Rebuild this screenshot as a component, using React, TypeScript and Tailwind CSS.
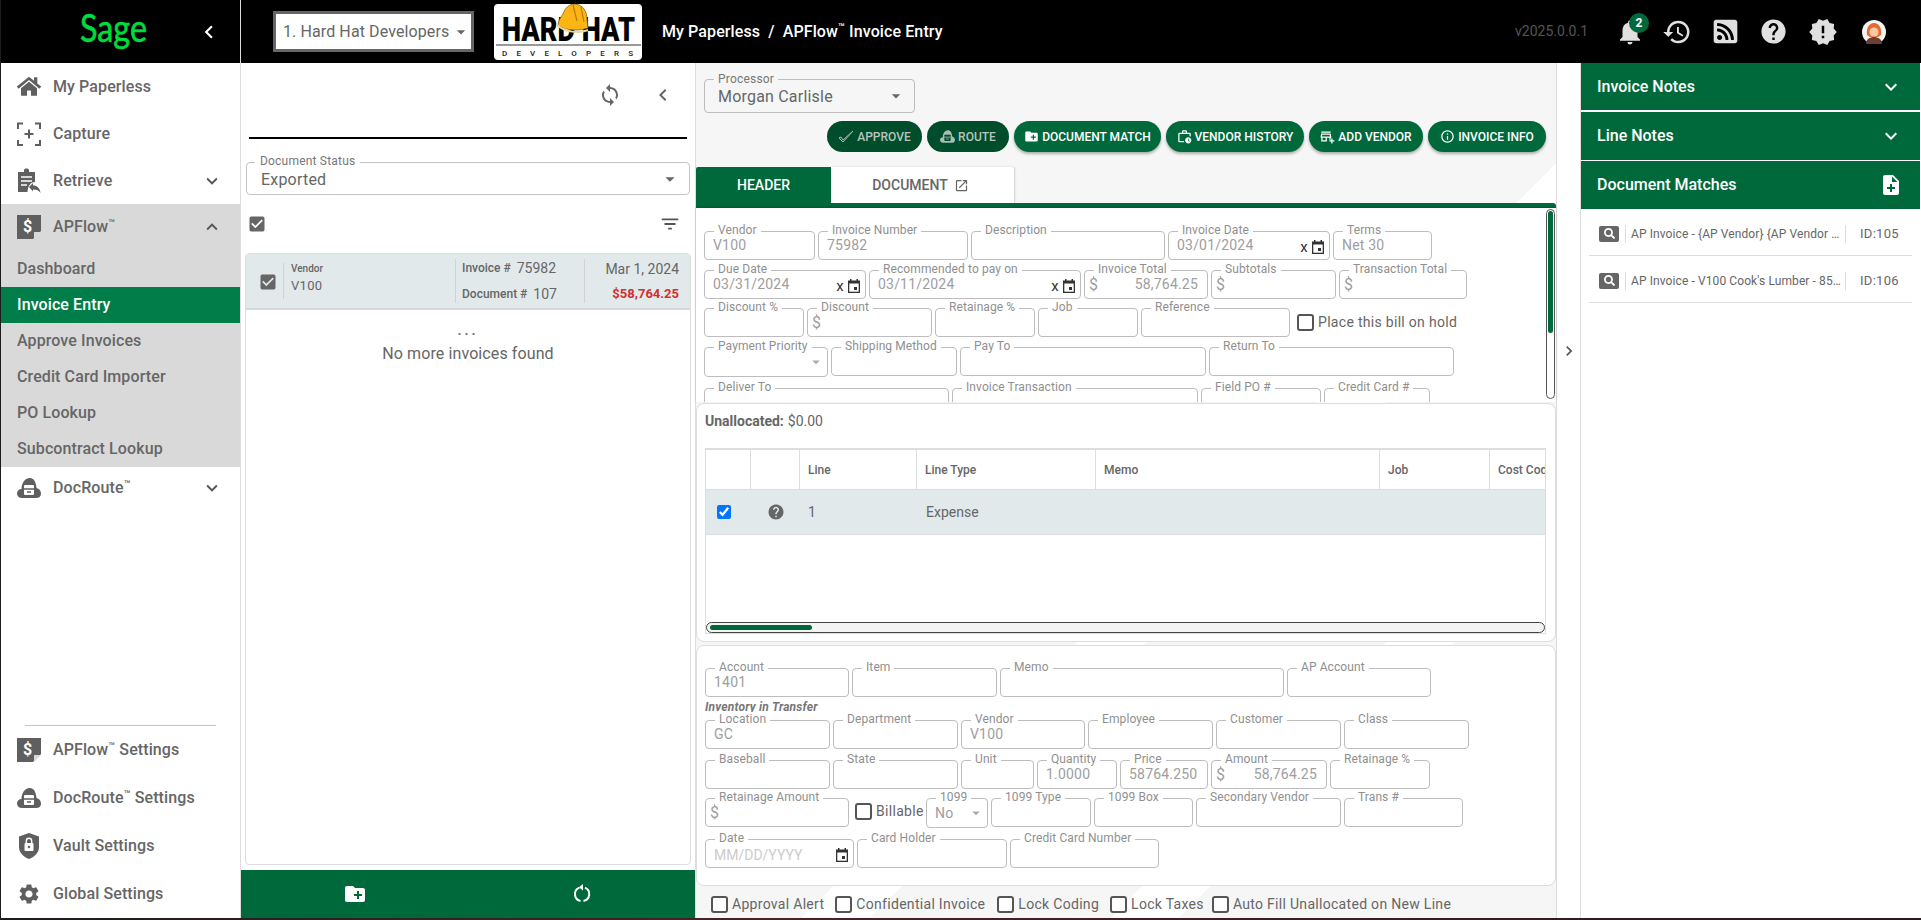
import React from "react";
import clsx from "clsx";
import { FaHome, FaRssSquare, FaSearch } from "react-icons/fa";
import {
  MdArrowDropDown,
  MdCheckBox,
  MdChevronLeft,
  MdCreateNewFolder,
  MdExpandLess,
  MdExpandMore,
  MdFilterList,
  MdHelp,
  MdHistory,
  MdInfoOutline,
  MdNewReleases,
  MdNoteAdd,
  MdNotifications,
  MdOpenInNew,
  MdOutlineAddBusiness,
  MdOutlineWorkHistory,
  MdChevronRight,
  MdSettings,
  MdSync,
} from "react-icons/md";

const CaptureIcon = () => (
  <svg width="24" height="24" viewBox="0 0 24 24" fill="none" stroke="#5f5f5f" strokeWidth="2">
    <path d="M1 7V1.5H6M18 1.5H23V7M1 18V23H6M18 23H23V18M12 7.5V16.5M7.5 12H16.5" />
  </svg>
);

const RetrieveIcon = () => (
  <svg width="24" height="26" viewBox="0 0 24 26" fill="#5f5f5f">
    <path d="M1 4H7V2.5C7 1 8 .5 9.5 .5S12 1 12 2.5V4H18V14C14 14 11 17 10.5 24H1Z" />
    <path d="M4 9H15M4 13H15M4 17H10" stroke="#fff" strokeWidth="1.6" />
    <path d="M12 19L16 15V17.5C20 17.5 23 20 23.5 25C22 22.5 20 21.5 16 21.5V23.5Z" />
  </svg>
);

const FlowIcon = () => (
  <svg width="24" height="24" viewBox="0 0 24 24">
    <path d="M0 0H24V16L16 24H0Z" fill="#5f5f5f" />
    <path d="M17 24L24 17H17Z" fill="#d9d9d9" />
    <text x="6" y="17" fontSize="16" fontWeight="700" fontFamily="Roboto, sans-serif" fill="#fff">
      $
    </text>
  </svg>
);

const CloudIcon = ({ size = 24, fill = "#5f5f5f", inner = "#fff" }: { size?: number; fill?: string; inner?: string }) => (
  <svg width={size} height={size} viewBox="0 0 24 24">
    <path
      d="M5 22C2 22 0 20 0 17.5S2 13 4.5 13C4.5 7 8 2 12.5 2S19 6 19.5 12C22 12.5 24 14.5 24 17.5S22 22 19 22Z"
      fill={fill}
    />
    <rect x="7" y="9" width="10" height="10" rx="1" fill={inner} />
    <path d="M7 13H17M10 16H14" stroke={fill} strokeWidth="1.3" />
  </svg>
);

const VaultIcon = () => (
  <svg width="24" height="26" viewBox="0 0 24 26">
    <path d="M12 0L22 3.5V14C22 20 17 24 12 26C7 24 2 20 2 14V3.5Z" fill="#5f5f5f" />
    <rect x="7.5" y="10" width="9" height="8" rx="1" fill="#fff" />
    <path d="M9.3 10V8A2.7 2.7 0 0 1 14.7 8V10" fill="none" stroke="#fff" strokeWidth="1.4" />
    <circle cx="12" cy="14" r="1.2" fill="#5f5f5f" />
  </svg>
);

const CalendarIcon = () => (
  <svg width="12" height="14" viewBox="0 0 12 14">
    <path d="M2 0H3.5V1.5H8.5V0H10V1.5H12V14H0V1.5H2Z" fill="#333" />
    <rect x="1.3" y="4.5" width="9.4" height="8.2" fill="#fff" />
    <rect x="6" y="8" width="3" height="3" fill="#333" />
  </svg>
);

const CheckIcon = () => (
  <svg width="16" height="16" viewBox="0 0 16 16" fill="none" stroke="#a9bdb2" strokeWidth="1">
    <path d="M1 9L5 13L15 2L5 11L3 8Z" />
  </svg>
);

const ReloadIcon = () => (
  <svg width="24" height="24" viewBox="0 0 24 24" fill="none" stroke="#fff" strokeWidth="2">
    <path d="M9.5 5.6A7 7 0 0 0 10.5 19" />
    <path d="M13.5 19A7 7 0 0 0 15 5.7" />
    <path d="M13 2V8.5L9 5.2Z" fill="#fff" stroke="none" />
  </svg>
);

const Avatar = () => (
  <svg width="24" height="24" viewBox="0 0 24 24">
    <circle cx="12" cy="12" r="12" fill="#f4f4f4" />
    <path d="M4 24C4 19 8 17 12 17S20 19 20 24Z" fill="#6b3f33" />
    <path d="M5 15C4 8 7 3 12 3S20 8 19 15L16 17H8Z" fill="#e8692c" />
    <circle cx="12" cy="12" r="4.6" fill="#f7c9a8" />
  </svg>
);

const HardHatLogo = () => (
  <svg width="148" height="56" viewBox="0 0 148 56" className="rounded-[4px] bg-white">
    <text
      x="8"
      y="37"
      fontSize="33"
      fontWeight="900"
      fontFamily="Roboto, sans-serif"
      textLength="133"
      lengthAdjust="spacingAndGlyphs"
      fill="#000"
    >
      HARD HAT
    </text>
    <g transform="translate(3 -3)">
      <path d="M62 25C60 24 62 18 66 13C68 7 72 3 78 3C86 4 90 10 90 19L91 27C82 30 70 30 62 25Z" fill="#fdb515" stroke="#7a5200" strokeWidth=".7" />
      <path d="M60 24C68 31 82 33 91 29" fill="none" stroke="#e8d9a0" strokeWidth="2" />
      <path d="M76 4L80 20M84 6L87 21" stroke="#b97a08" strokeWidth="1.2" />
    </g>
    <path d="M2 41H147" stroke="#333" strokeWidth="1" />
    <text
      x="8"
      y="52"
      fontSize="8"
      fontWeight="500"
      fontFamily="Roboto, sans-serif"
      textLength="131"
      fill="#222"
    >
      DEVELOPERS
    </text>
  </svg>
);

const SageLogo = () => (
  <svg width="70" height="44" viewBox="0 0 70 44" className="overflow-visible">
    <text
      x="1"
      y="32"
      fontSize="38"
      fontFamily="Lato, sans-serif"
      fontWeight="400"
      textLength="67"
      lengthAdjust="spacingAndGlyphs"
      fill="#00dc3c"
      stroke="#00dc3c"
      strokeWidth=".6"
    >
      Sage
    </text>
  </svg>
);

const NavRow = ({
  icon,
  label,
  className,
  chevron,
}: {
  icon: React.ReactNode;
  label: React.ReactNode;
  className: string;
  chevron?: "up" | "down";
}) => (
  <div className={clsx("flex items-center pl-[16px] pr-[17px] text-[16px] font-medium tracking-[0.1px] text-[#666]", className)}>
    <div className="flex w-[24px] items-center justify-center">{icon}</div>
    <div className="ml-[12px] flex-1">{label}</div>
    {chevron === "down" && <MdExpandMore size={22} className="text-[#555]" />}
    {chevron === "up" && <MdExpandLess size={22} className="text-[#555]" />}
  </div>
);

const SubRow = ({ label, className }: { label: string; className: string }) => (
  <div className={clsx("flex items-center pl-[16px] text-[16px] font-medium tracking-[0.1px]", className)}>{label}</div>
);

const Tm = () => <sup className="text-[11px] leading-none">™</sup>;

const Field = ({
  label,
  value,
  w,
  dollar,
  date,
  select,
  h = "h-[29px]",
}: {
  label: string;
  value?: string;
  w: string;
  dollar?: boolean;
  date?: boolean;
  select?: boolean;
  h?: string;
}) => (
  <div className={clsx("relative flex shrink-0 items-center rounded-[4px] border border-[#bdbdbd] bg-white text-[14px] tracking-[0.2px] text-[#9e9e9e]", w, h)}>
    <span className="absolute -top-[9px] left-[9px] whitespace-nowrap bg-white px-[4px] text-[12px] leading-[15px] tracking-[0.1px] text-[#8f8f8f]">
      {label}
    </span>
    {dollar ? (
      <div className="flex w-full items-center justify-between pl-[4px] pr-[9px]">
        <span className="text-[16px]">$</span>
        <span>{value}</span>
      </div>
    ) : (
      <span className="whitespace-nowrap pl-[8px]">{value}</span>
    )}
    {date && (
      <span className="ml-auto flex items-center gap-[4px] pr-[5px] pt-[3px] text-[#333]">
        {value && <span className="text-[15px] leading-none">x</span>}
        <CalendarIcon />
      </span>
    )}
    {select && <MdArrowDropDown size={18} className="ml-auto mr-[2px] text-[#aaa]" />}
  </div>
);

const CheckLabel = ({ label, className }: { label: string; className?: string }) => (
  <div className={clsx("flex items-center gap-[4px] text-[14px] tracking-[0.3px] text-[#666]", className)}>
    <span className="h-[17px] w-[17px] shrink-0 rounded-[3px] border-2 border-[#555] bg-white" />
    <span className="whitespace-nowrap">{label}</span>
  </div>
);

const ActionButton = ({
  icon,
  label,
  w,
  dim,
}: {
  icon: React.ReactNode;
  label: string;
  w: string;
  dim?: boolean;
}) => (
  <button
    className={clsx(
      "flex h-[31px] items-center justify-center gap-[3px] rounded-full text-[12px] font-medium",
      w,
      dim ? "bg-[#004d2b] text-[#b4c6bb]" : "bg-[#00693c] text-white shadow-[0_2px_3px_rgba(0,0,0,0.3)]"
    )}
  >
    {icon}
    {label}
  </button>
);

const MatchRow = ({ text, id }: { text: string; id: string }) => (
  <div className="mx-[8px] flex h-[47px] items-center border-b border-[#ddd] pt-[3px] text-[13px] text-[#666]">
    <div className="ml-[10px] flex h-[16px] w-[20px] shrink-0 items-center justify-center rounded-[2px] bg-[#666]">
      <FaSearch size={11} className="text-white" />
    </div>
    <div className="ml-[6px] w-[221px] truncate border-x border-[#ddd] pl-[5px] text-[12px] tracking-[0.1px]">{text}</div>
    <div className="ml-[14px] tracking-[0.3px]">{id}</div>
  </div>
);

const cols = ["w-[45px]", "w-[49px]", "w-[117px]", "w-[179px]", "w-[284px]", "w-[110px]", "w-[57px]"];
const heads = ["", "", "Line", "Line Type", "Memo", "Job", "Cost Code"];

export default function App() {
  return (
    <div className="h-[920px] w-[1921px] overflow-hidden bg-[linear-gradient(90deg,#1c1c1c,#4a2228_40%,#2a1a1c)] pl-px font-['Roboto',sans-serif]">
      <header className="flex h-[63px] items-center bg-black">
        <div className="flex h-full w-[239px] items-center pl-[78px]">
          <SageLogo />
          <MdChevronLeft size={26} className="ml-[47px] text-white" />
        </div>
        <div className="h-full w-px bg-[#ddd]" />
        <div className="ml-[32px] flex h-[41px] w-[201px] items-center justify-between whitespace-nowrap border-[3px] border-[#666] bg-white pl-[7px] text-[16px] tracking-[0.1px] text-[#666]">
          1. Hard Hat Developers
          <MdArrowDropDown size={20} className="shrink-0" />
        </div>
        <div className="ml-[20px]">
          <HardHatLogo />
        </div>
        <div className="ml-[20px] text-[16px] font-medium tracking-[0.1px] text-white">My Paperless&nbsp; /&nbsp; APFlow<Tm /> Invoice Entry</div>
        <div className="ml-auto mr-[27px] text-[14px] text-[#555]">v2025.0.0.1</div>
        <div className="relative mr-[17px]">
          <MdNotifications size={30} className="text-[#e0e0e0]" />
          <span className="absolute -right-[4px] -top-[4px] flex h-[20px] w-[20px] items-center justify-center rounded-full bg-[#00693c] text-[12px] font-bold text-white">
            2
          </span>
        </div>
        <MdHistory size={30} className="mr-[20px] text-[#e0e0e0]" />
        <FaRssSquare size={27} className="mr-[20px] text-[#e0e0e0]" />
        <MdHelp size={29} className="mr-[20px] text-[#e0e0e0]" />
        <MdNewReleases size={30} className="mr-[24px] text-[#e0e0e0]" />
        <div className="mr-[35px]">
          <Avatar />
        </div>
      </header>

      <div className="flex h-[855px] bg-white">
        <aside className="flex w-[240px] shrink-0 flex-col border-r border-[#ddd] bg-white">
          <NavRow className="h-[47px]" icon={<FaHome size={25} className="text-[#5f5f5f]" />} label="My Paperless" />
          <NavRow className="h-[48px]" icon={<CaptureIcon />} label="Capture" />
          <NavRow className="h-[46px]" icon={<RetrieveIcon />} label="Retrieve" chevron="down" />
          <div className="bg-[#d9d9d9] text-[#666]">
            <NavRow
              className="h-[46px]"
              icon={<FlowIcon />}
              label={
                <>
                  APFlow
                  <Tm />
                </>
              }
              chevron="up"
            />
            <SubRow className="h-[37px]" label="Dashboard" />
            <SubRow className="h-[36px] bg-[#007d48] text-white" label="Invoice Entry" />
            <SubRow className="h-[36px]" label="Approve Invoices" />
            <SubRow className="h-[36px]" label="Credit Card Importer" />
            <SubRow className="h-[36px]" label="PO Lookup" />
            <SubRow className="h-[36px]" label="Subcontract Lookup" />
          </div>
          <NavRow
            className="h-[42px]"
            icon={<CloudIcon />}
            label={
              <>
                DocRoute
                <Tm />
              </>
            }
            chevron="down"
          />
          <div className="flex-1" />
          <div className="mx-[24px] border-t border-[#c4c4c4]" />
          <NavRow
            className="h-[48px]"
            icon={<FlowIcon />}
            label={
              <>
                APFlow
                <Tm /> Settings
              </>
            }
          />
          <NavRow
            className="h-[48px]"
            icon={<CloudIcon />}
            label={
              <>
                DocRoute
                <Tm /> Settings
              </>
            }
          />
          <NavRow className="h-[48px]" icon={<VaultIcon />} label="Vault Settings" />
          <NavRow className="h-[48px]" icon={<MdSettings size={28} className="text-[#5f5f5f]" />} label="Global Settings" />
        </aside>

        <section className="flex w-[454px] shrink-0 flex-col">
          <div className="flex h-[64px] items-center justify-end pr-[20px] text-[#666]">
            <MdSync size={24} />
            <MdChevronLeft size={24} className="ml-[29px]" />
          </div>
          <div className="mx-[8px] mt-[10px] h-[2px] bg-black" />
          <div className="relative mx-[5px] mt-[23px] flex h-[33px] items-center justify-between rounded-[4px] border border-[#c4c4c4] pl-[14px] pr-[8px] text-[16px] tracking-[0.2px] text-[#666]">
            <span className="absolute -top-[9px] left-[8px] bg-white px-[5px] text-[12px] leading-[15px] text-[#777]">Document Status</span>
            <span className="pt-[2px]">Exported</span>
            <MdArrowDropDown size={22} className="text-[#666]" />
          </div>
          <div className="flex h-[58px] items-center justify-between pl-[6px] pr-[14px]">
            <MdCheckBox size={20} className="text-[#666]" />
            <MdFilterList size={22} className="text-[#555]" />
          </div>
          <div className="mx-[4px] flex flex-1 flex-col rounded-[4px] border border-[#ddd] text-[#666]">
            <div className="flex h-[56px] items-stretch border-b-2 border-[#d5d9db] bg-[#e2e9eb]">
              <div className="flex w-[37px] items-center justify-end pr-[5px] pt-[2px]">
                <MdCheckBox size={20} className="text-[#666]" />
              </div>
              <div className="my-[9px] w-[172px] border-l border-[#cfd4d6] pl-[7px]">
                <div className="text-[10px] font-medium leading-[12px]">Vendor</div>
                <div className="mt-px text-[13px] tracking-[0.3px]">V100</div>
              </div>
              <div className="my-[5px] w-[129px] border-l border-[#cfd4d6] pl-[6px] text-[12px] font-medium">
                <div className="mt-[1px] flex items-center gap-[6px] leading-[16px]">
                  Invoice #<span className="text-[14px] font-normal">75982</span>
                </div>
                <div className="mt-[10px] flex items-center gap-[6px] leading-[16px]">
                  Document #<span className="text-[14px] font-normal">107</span>
                </div>
              </div>
              <div className="my-[5px] flex-1 border-l border-[#cfd4d6] pr-[11px] text-right">
                <div className="mt-[2px] text-[14px] leading-[16px]">Mar 1, 2024</div>
                <div className="mt-[9px] text-[13px] font-bold leading-[16px] text-[#d32f2f]">$58,764.25</div>
              </div>
            </div>
            <div className="mt-[12px] text-center text-[14px] font-bold leading-[16px] tracking-[3px] text-[#777]">...</div>
            <div className="mt-[4px] text-center text-[16px] tracking-[0.1px]">No more invoices found</div>
          </div>
          <div className="mt-[5px] flex h-[48px] items-center bg-[#00693c] text-white">
            <div className="flex flex-1 justify-center">
              <MdCreateNewFolder size={24} />
            </div>
            <div className="flex flex-1 justify-center">
              <ReloadIcon />
            </div>
          </div>
        </section>

        <main className="flex w-[861px] shrink-0 flex-col border-l border-[#ddd] bg-[#f6f6f6] bg-[linear-gradient(135deg,#f6f6f6_0%,#f6f6f6_56%,#fff_56%,#fff_60%,#f6f6f6_60%,#f6f6f6_74%,#fff_74%,#fff_78%,#f6f6f6_78%)]">
          <div className="relative ml-[8px] mt-[16px] flex h-[34px] w-[211px] items-center justify-between rounded-[4px] border border-[#bdbdbd] pl-[13px] pr-[8px] text-[16px] tracking-[0.2px] text-[#666]">
            <span className="absolute -top-[8px] left-[9px] bg-[#f6f6f6] px-[4px] text-[12px] leading-[15px] text-[#777]">Processor</span>
            <span className="pt-[2px]">Morgan Carlisle</span>
            <MdArrowDropDown size={20} />
          </div>
          <div className="mr-[10px] mt-[8px] flex justify-end gap-[5px]">
            <ActionButton dim w="w-[95px]" icon={<CheckIcon />} label="APPROVE" />
            <ActionButton dim w="w-[82px]" icon={<CloudIcon size={15} fill="#a9bdb2" inner="#004d2b" />} label="ROUTE" />
            <ActionButton w="w-[147px]" icon={<MdCreateNewFolder size={15} />} label="DOCUMENT MATCH" />
            <ActionButton w="w-[138px]" icon={<MdOutlineWorkHistory size={15} />} label="VENDOR HISTORY" />
            <ActionButton w="w-[114px]" icon={<MdOutlineAddBusiness size={15} />} label="ADD VENDOR" />
            <ActionButton w="w-[118px]" icon={<MdInfoOutline size={15} />} label="INVOICE INFO" />
          </div>
          <div className="mt-[15px] flex h-[36px]">
            <div className="flex w-[135px] items-center justify-center rounded-tl-[2px] bg-[#00693c] text-[14px] font-medium text-white">HEADER</div>
            <div className="flex w-[183px] items-center justify-center gap-[6px] rounded-tr-[2px] bg-white pr-[4px] text-[14px] font-medium text-[#666] shadow-[1px_0_2px_rgba(0,0,0,0.15)]">
              DOCUMENT
              <MdOpenInNew size={15} />
            </div>
          </div>
          <div className="h-[5px] rounded-tr-[3px] bg-[#00693c]" />

          <div className="relative h-[194px] overflow-hidden bg-white pl-[8px] shadow-[0_-1px_2px_rgba(0,0,0,0.2)]">
            <div className="mt-[23px] flex gap-[3px]">
              <Field w="w-[111px]" label="Vendor" value="V100" />
              <Field w="w-[150px]" label="Invoice Number" value="75982" />
              <Field w="w-[194px]" label="Description" />
              <Field w="w-[162px]" label="Invoice Date" value="03/01/2024" date />
              <Field w="w-[99px]" label="Terms" value="Net 30" />
            </div>
            <div className="mt-[10px] flex gap-[3px]">
              <Field w="w-[162px]" label="Due Date" value="03/31/2024" date />
              <Field w="w-[212px]" label="Recommended to pay on" value="03/11/2024" date />
              <Field w="w-[124px]" label="Invoice Total" value="58,764.25" dollar />
              <Field w="w-[125px]" label="Subtotals" dollar />
              <Field w="w-[128px]" label="Transaction Total" dollar />
            </div>
            <div className="mt-[9px] flex gap-[3px]">
              <Field w="w-[100px]" label="Discount %" />
              <Field w="w-[125px]" label="Discount" dollar />
              <Field w="w-[100px]" label="Retainage %" />
              <Field w="w-[100px]" label="Job" />
              <Field w="w-[149px]" label="Reference" />
              <CheckLabel className="ml-[4px] self-start pt-[4px]" label="Place this bill on hold" />
            </div>
            <div className="mt-[10px] flex gap-[3px]">
              <Field w="w-[124px]" h="h-[30px]" label="Payment Priority" select />
              <Field w="w-[126px]" label="Shipping Method" />
              <Field w="w-[246px]" label="Pay To" />
              <Field w="w-[245px]" label="Return To" />
            </div>
            <div className="mt-[11px] flex gap-[3px]">
              <Field w="w-[245px]" label="Deliver To" />
              <Field w="w-[246px]" label="Invoice Transaction" />
              <Field w="w-[120px]" label="Field PO #" />
              <Field w="w-[106px]" label="Credit Card #" />
            </div>
            <div className="absolute bottom-[3px] right-[1px] top-[1px] w-[9px] rounded-full border border-[#555] bg-white">
              <div className="mx-auto mt-[1px] h-[122px] w-[5px] rounded-full bg-[#00693c]" />
            </div>
          </div>

          <div className="mt-px h-[239px] rounded-[8px] border border-[#ddd] bg-white pl-[8px] pr-[9px]">
            <div className="flex h-[44px] items-center pb-[9px] text-[14px] text-[#666]">
              <span className="mr-[4px] font-bold">Unallocated:</span> $0.00
            </div>
            <div className="flex h-[186px] flex-col overflow-hidden border-x border-b border-t-2 border-[#ddd]">
              <div className="flex h-[40px] border-b border-[#ddd]">
                {heads.map((h, i) => (
                  <div key={i} className={clsx("flex shrink-0 items-center whitespace-nowrap pl-[8px] text-[12px] font-medium text-[#666]", cols[i], i < 6 && "border-r border-[#ddd]")}>
                    {h}
                  </div>
                ))}
              </div>
              <div className="flex h-[45px] items-center border-b border-[#ddd] bg-[#e2e9eb] text-[14px] text-[#666]">
                <div className="flex w-[45px] shrink-0 justify-center pr-[10px]">
                  <input type="checkbox" checked readOnly className="h-[14px] w-[14px]" />
                </div>
                <div className="flex w-[49px] shrink-0 justify-center">
                  <MdHelp size={18} className="text-[#666]" />
                </div>
                <div className="w-[117px] shrink-0 pl-[8px]">1</div>
                <div className="w-[179px] shrink-0 pl-[9px]">Expense</div>
              </div>
              <div className="flex-1" />
              <div className="h-[11px] rounded-full border border-[#444] bg-[#f4f4f4] p-[2px]">
                <div className="ml-[1px] h-full w-[102px] rounded-full bg-[#00693c]" />
              </div>
            </div>
          </div>

          <div className="mt-[3px] h-[241px] rounded-[8px] border border-[#ddd] bg-white pl-[8px] pr-[9px]">
            <div className="mt-[22px] flex gap-[3px]">
              <Field w="w-[144px]" label="Account" value="1401" />
              <Field w="w-[145px]" label="Item" />
              <Field w="w-[284px]" label="Memo" />
              <Field w="w-[144px]" label="AP Account" />
            </div>
            <div className="flex h-[23px] items-center pb-[3px] text-[12px] font-bold italic tracking-[0.2px] text-[#777]">Inventory in Transfer</div>
            <div className="flex gap-[3px]">
              <Field w="w-[125px]" label="Location" value="GC" />
              <Field w="w-[125px]" label="Department" />
              <Field w="w-[124px]" label="Vendor" value="V100" />
              <Field w="w-[125px]" label="Employee" />
              <Field w="w-[125px]" label="Customer" />
              <Field w="w-[125px]" label="Class" />
            </div>
            <div className="mt-[11px] flex gap-[3px]">
              <Field w="w-[125px]" label="Baseball" />
              <Field w="w-[125px]" label="State" />
              <Field w="w-[73px]" label="Unit" />
              <Field w="w-[80px]" label="Quantity" value="1.0000" />
              <Field w="w-[88px]" label="Price" value="58764.250" />
              <Field w="w-[116px]" label="Amount" value="58,764.25" dollar />
              <Field w="w-[100px]" label="Retainage %" />
            </div>
            <div className="mt-[9px] flex gap-[3px]">
              <Field w="w-[144px]" label="Retainage Amount" dollar />
              <CheckLabel className="ml-[3px] w-[68px] self-start pt-[3px]" label="Billable" />
              <Field w="w-[62px]" h="h-[30px]" label="1099" value="No" select />
              <Field w="w-[100px]" label="1099 Type" />
              <Field w="w-[99px]" label="1099 Box" />
              <Field w="w-[145px]" label="Secondary Vendor" />
              <Field w="w-[119px]" label="Trans #" />
            </div>
            <div className="mt-[11px] flex gap-[3px]">
              <div className="relative w-[149px]">
                <Field w="w-[149px]" label="Date" date />
                <span className="absolute left-[9px] top-[6px] text-[14px] text-[#ccc]">MM/DD/YYYY</span>
              </div>
              <Field w="w-[150px]" label="Card Holder" />
              <Field w="w-[149px]" label="Credit Card Number" />
            </div>
          </div>

          <div className="flex h-[32px] items-center pl-[15px] pt-[4px]">
            <CheckLabel label="Approval Alert" />
            <CheckLabel className="ml-[11px]" label="Confidential Invoice" />
            <CheckLabel className="ml-[12px]" label="Lock Coding" />
            <CheckLabel className="ml-[11px]" label="Lock Taxes" />
            <CheckLabel className="ml-[8px]" label="Auto Fill Unallocated on New Line" />
          </div>
        </main>

        <div className="flex w-[25px] shrink-0 items-center justify-center border-x border-[#ddd] bg-white pb-[280px]">
          <MdChevronRight size={20} className="text-[#555]" />
        </div>

        <aside className="w-[339px] shrink-0 bg-white">
          <div className="flex h-[48px] items-center justify-between border-b border-white bg-[#00693c] pl-[16px] pr-[17px] text-[16px] font-medium text-white">
            Invoice Notes
            <MdExpandMore size={24} />
          </div>
          <div className="mt-px flex h-[48px] items-center justify-between bg-[#00693c] pl-[16px] pr-[17px] text-[16px] font-medium text-white">
            Line Notes
            <MdExpandMore size={24} />
          </div>
          <div className="mt-px flex h-[48px] items-center justify-between bg-[#00693c] pl-[16px] pr-[17px] text-[16px] font-medium text-white">
            Document Matches
            <MdNoteAdd size={24} />
          </div>
          <MatchRow text="AP Invoice - {AP Vendor} {AP Vendor Name} - Invoice" id="ID:105" />
          <MatchRow text="AP Invoice - V100 Cook's Lumber - 85764.25" id="ID:106" />
        </aside>
      </div>
    </div>
  );
}
